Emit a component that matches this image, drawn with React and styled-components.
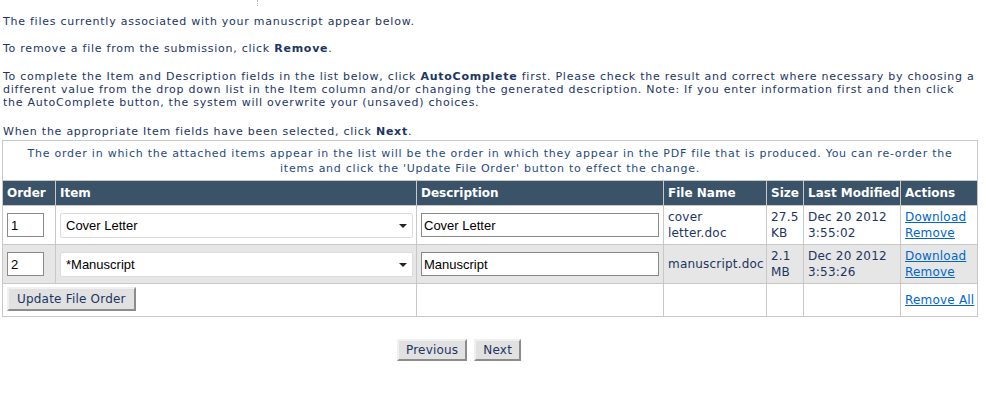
import React from "react";
import styled, { createGlobalStyle } from "styled-components";

const GlobalStyle = createGlobalStyle`
  html, body { margin: 0; padding: 0; background: #fff; }
  body {
    padding: 0 2px;
    font-family: Verdana, "DejaVu Sans", sans-serif;
    font-size: 11px;
    color: #1c3561;
  }
`;

const Page = styled.div`
  width: 976px;
`;

const Marker = styled.div`
  margin-left: 255px;
  width: 0;
  height: 6px;
  border-left: 1px dotted #b8b8b8;
`;

const Para = styled.p`
  margin: ${(p) => p.$top || 8}px 0 0 1px;
  line-height: 13px;
  letter-spacing: 0.75px;
`;

const Strong = styled.b`
  font-weight: bold;
`;

const Table = styled.table`
  margin-top: 2px;
  width: 975px;
  border-collapse: collapse;
  table-layout: fixed;
  font-size: 12px;
`;

const CaptionCell = styled.td`
  border: 1px solid #c8c8c8;
  text-align: center;
  color: #1f4b7a;
  font-size: 11px;
  letter-spacing: 0.75px;
  line-height: 15px;
  padding: 5px 14px 4px;
`;

const Th = styled.th`
  background: #3b5368;
  color: #fff;
  font-weight: bold;
  text-align: left;
  border: 1px solid #c8c8c8;
  padding: 4px 4px 4px;
  line-height: 16px;
  white-space: nowrap;
`;

const Tr = styled.tr`
  background: ${(p) => (p.$alt ? "#e6e6e6" : "#fff")};
`;

const Td = styled.td`
  border: 1px solid #c8c8c8;
  padding: 3px 3px ${(p) => (p.$tall ? 5 : 3)}px 4px;
  line-height: 16px;
  letter-spacing: 0.2px;
  vertical-align: middle;
  color: #1c3561;
`;

const OrderInput = styled.input`
  box-sizing: border-box;
  display: block;
  width: 37px;
  height: 24px;
  border: 1px solid #8a8a8a;
  padding: 2px 3px;
  margin: 0;
  font-family: "Liberation Sans", Arial, sans-serif;
  font-size: 13px;
  letter-spacing: 0;
  color: #000;
`;

const SelectWrap = styled.div`
  position: relative;
  width: 353px;
`;

const Select = styled.select`
  appearance: none;
  display: block;
  box-sizing: border-box;
  width: 100%;
  height: 25px;
  border: 1px solid #dcdcdc;
  border-radius: 2px;
  background: #fff;
  padding: 2px 5px;
  margin: 0;
  font-family: "Liberation Sans", Arial, sans-serif;
  font-size: 13px;
  color: #000;
`;

const Arrow = styled.span`
  position: absolute;
  right: 6px;
  top: 11px;
  width: 0;
  height: 0;
  border-left: 4px solid transparent;
  border-right: 4px solid transparent;
  border-top: 4px solid #222;
  pointer-events: none;
`;

const DescInput = styled.input`
  box-sizing: border-box;
  display: block;
  width: 238px;
  height: 24px;
  border: 1px solid #8a8a8a;
  padding: 2px 2px;
  margin: 0;
  font-family: "Liberation Sans", Arial, sans-serif;
  font-size: 13px;
  letter-spacing: 0;
  color: #000;
`;

const Link = styled.a`
  display: block;
  white-space: nowrap;
  color: #0066cc;
  text-decoration: underline;
  cursor: pointer;
`;

const Button = styled.button`
  box-sizing: border-box;
  display: block;
  height: ${(p) => p.$h || 22}px;
  padding: 0 ${(p) => p.$px || 7}px;
  margin: 0;
  background: #e1e1e1;
  border: 2px solid;
  border-color: #f0f0f0 #8c8c8c #8c8c8c #f0f0f0;
  font-family: Verdana, "DejaVu Sans", sans-serif;
  font-size: 12px;
  letter-spacing: 0.2px;
  color: #1c3561;
  cursor: pointer;
`;

const Nav = styled.div`
  display: flex;
  justify-content: center;
  gap: 7px;
  margin-top: 22px;
  padding-right: 62px;
`;

const rows = [
  {
    order: "1",
    item: "Cover Letter",
    desc: "Cover Letter",
    file: "cover letter.doc",
    size: "27.5 KB",
    modified: "Dec 20 2012 3:55:02",
  },
  {
    order: "2",
    item: "*Manuscript",
    desc: "Manuscript",
    file: "manuscript.doc",
    size: "2.1 MB",
    modified: "Dec 20 2012 3:53:26",
  },
];

export default function App() {
  return (
    <Page>
      <GlobalStyle />
      <Marker />
      <Para $top={9}>The files currently associated with your manuscript appear below.</Para>
      <Para $top={14}>
        To remove a file from the submission, click <Strong>Remove</Strong>.
      </Para>
      <Para $top={15}>
        To complete the Item and Description fields in the list below, click <Strong>AutoComplete</Strong> first. Please
        check the result and correct where necessary by choosing a different value from the drop down list in the Item
        column and/or changing the generated description. Note: If you enter information first and then click the
        AutoComplete button, the system will overwrite your (unsaved) choices.
      </Para>
      <Para $top={16}>
        When the appropriate Item fields have been selected, click <Strong>Next</Strong>.
      </Para>
      <Table>
        <colgroup>
          <col style={{ width: 53 }} />
          <col style={{ width: 361 }} />
          <col style={{ width: 247 }} />
          <col style={{ width: 103 }} />
          <col style={{ width: 37 }} />
          <col style={{ width: 97 }} />
          <col style={{ width: 77 }} />
        </colgroup>
        <tbody>
          <tr>
            <CaptionCell colSpan={7}>
              The order in which the attached items appear in the list will be the order in which they appear in the PDF
              file that is produced. You can re-order the items and click the 'Update File Order' button to effect the
              change.
            </CaptionCell>
          </tr>
          <tr>
            <Th>Order</Th>
            <Th>Item</Th>
            <Th>Description</Th>
            <Th>File Name</Th>
            <Th>Size</Th>
            <Th>Last Modified</Th>
            <Th>Actions</Th>
          </tr>
          {rows.map((r, i) => (
            <Tr key={r.order} $alt={i % 2 === 1}>
              <Td>
                <OrderInput defaultValue={r.order} />
              </Td>
              <Td>
                <SelectWrap>
                  <Select defaultValue={r.item}>
                    <option>{r.item}</option>
                  </Select>
                  <Arrow />
                </SelectWrap>
              </Td>
              <Td>
                <DescInput defaultValue={r.desc} />
              </Td>
              <Td>{r.file}</Td>
              <Td>{r.size}</Td>
              <Td>{r.modified}</Td>
              <Td>
                <Link>Download</Link>
                <Link>Remove</Link>
              </Td>
            </Tr>
          ))}
          <Tr>
            <Td colSpan={2} $tall>
              <Button $h={24} $px={8}>Update File Order</Button>
            </Td>
            <Td />
            <Td />
            <Td />
            <Td />
            <Td>
              <Link>Remove All</Link>
            </Td>
          </Tr>
        </tbody>
      </Table>
      <Nav>
        <Button>Previous</Button>
        <Button>Next</Button>
      </Nav>
    </Page>
  );
}
